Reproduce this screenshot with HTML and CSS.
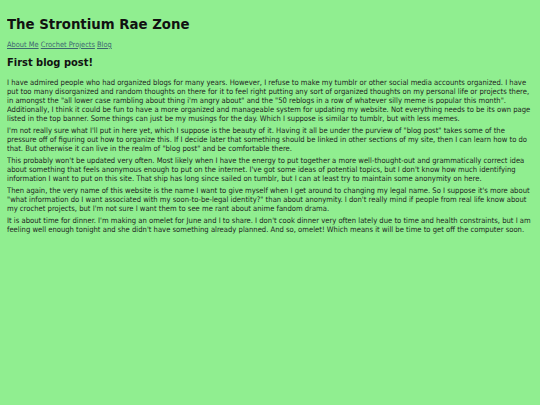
FILE: index.html
```html
<!DOCTYPE html>
<html lang="en">
<head>
<meta charset="utf-8">
<title>The Strontium Rae Zone</title>
<link rel="stylesheet" href="styles.css">
</head>
<body>
<header class="banner">
<h1 class="site-title">The Strontium Rae Zone</h1>
<nav class="nav"><a href="#">About Me</a> <a href="#">Crochet Projects</a> <a href="#">Blog</a></nav>
</header>
<main class="post">
<h2 class="post-title">First blog post!</h2>
<p>I have admired people who had organized blogs for many years. However, I refuse to make my tumblr or other social media accounts organized. I have put too many disorganized and random thoughts on there for it to feel right putting any sort of organized thoughts on my personal life or projects there, in amongst the "all lower case rambling about thing i'm angry about" and the "50 reblogs in a row of whatever silly meme is popular this month". Additionally, I think it could be fun to have a more organized and manageable system for updating my website. Not everything needs to be its own page listed in the top banner. Some things can just be my musings for the day. Which I suppose is similar to tumblr, but with less memes.</p>
<p>I'm not really sure what I'll put in here yet, which I suppose is the beauty of it. Having it all be under the purview of "blog post" takes some of the pressure off of figuring out how to organize this. If I decide later that something should be linked in other sections of my site, then I can learn how to do that. But otherwise it can live in the realm of "blog post" and be comfortable there.</p>
<p>This probably won't be updated very often. Most likely when I have the energy to put together a more well-thought-out and grammatically correct idea about something that feels anonymous enough to put on the internet. I've got some ideas of potential topics, but I don't know how much identifying information I want to put on this site. That ship has long since sailed on tumblr, but I can at least try to maintain some anonymity on here.</p>
<p>Then again, the very name of this website is the name I want to give myself when I get around to changing my legal name. So I suppose it's more about "what information do I want associated with my soon-to-be-legal identity?" than about anonymity. I don't really mind if people from real life know about my crochet projects, but I'm not sure I want them to see me rant about anime fandom drama.</p>
<p>It is about time for dinner. I'm making an omelet for June and I to share. I don't cook dinner very often lately due to time and health constraints, but I am feeling well enough tonight and she didn't have something already planned. And so, omelet! Which means it will be time to get off the computer soon.</p>
</main>
</body>
</html>
```
FILE: styles.css
```css
html { background: #90ee90; }
body {
  margin: 7px;
  font-family: "DejaVu Sans Condensed", "DejaVu Sans", Verdana, sans-serif;
  font-size: 7.6px;
  color: #1f1f1f;
  background: #90ee90;
}
.banner { padding-top: 8px; }
.site-title {
  font-size: 14.8px;
  font-weight: bold;
  line-height: 18px;
  margin: 0 0 7px 0;
  color: #111;
}
.nav { font-size: 7.4px; line-height: 9px; margin-bottom: 7px; }
.nav a { color: #3d6670; text-decoration: underline; }
.post-title {
  font-size: 11px;
  font-weight: bold;
  line-height: 14px;
  margin: 0 0 8px 0;
  color: #111;
}
.post p { margin: 0 0 3px 0; line-height: 9px; }
```
